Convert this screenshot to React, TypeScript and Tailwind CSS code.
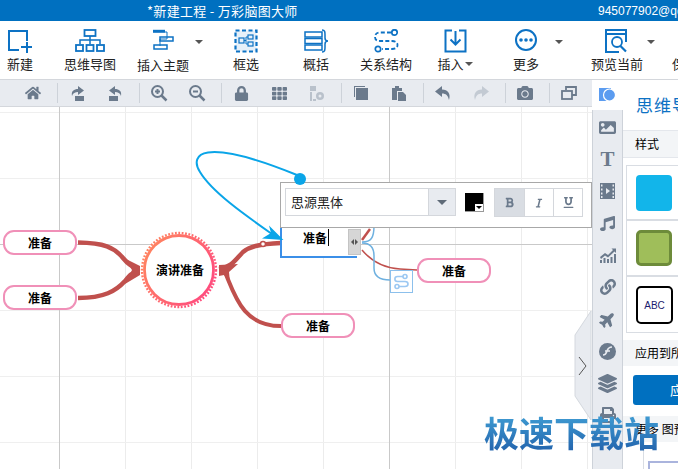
import React from "react";
import { FaHome, FaLock, FaTh, FaCamera, FaMusic, FaLink, FaPlane, FaLayerGroup, FaPrint, FaImage, FaBold, FaItalic, FaUnderline } from "react-icons/fa";

const B = "#0d72c4";
const S = ({ w = 24, children }: { w?: number; children: React.ReactNode }) => (
  <svg width={w} height={24} viewBox={`0 0 ${w} 24`} fill="none" stroke={B} strokeWidth={2}>{children}</svg>
);
const Caret = () => (
  <div className="w-[12px] h-[24px] mt-[11px] flex justify-center items-start shrink-0">
    <div className="w-0 h-0 mt-[8px] border-x-[4px] border-x-transparent border-t-[4px] border-t-[#555]" />
  </div>
);
function Tool({ label, cls, children, lower }: { label: React.ReactNode; cls: string; children: React.ReactNode; lower?: boolean }) {
  return (
    <div className={`${cls} shrink-0 flex flex-col items-center pt-[8px]`}>
      <div className="h-[24px] flex items-center justify-center">{children}</div>
      <div className={`${lower ? "mt-[4px]" : "mt-[3px]"} text-[13px] leading-[16px] text-[#222] whitespace-nowrap`}>{label}</div>
    </div>
  );
}
const Sep = () => (
  <div className="w-[6px] h-[20px] border-r border-[#cdd2d9] shrink-0" />
);
const Cell = ({ children }: { children: React.ReactNode }) => (
  <div className="w-[38px] shrink-0 flex items-center justify-center text-[#6b7a8c]">{children}</div>
);
const Zoom = ({ plus }: { plus?: boolean }) => (
  <svg width="18" height="18" viewBox="0 0 18 18" fill="none" stroke="#6b7a8c" strokeWidth="2">
    <circle cx="7.5" cy="7.5" r="5.5" />
    <path d="M11.5 11.5 L16.5 16.5" strokeWidth="2.5" />
    <path d="M5 7.5h5" />
    {plus && <path d="M7.5 5v5" />}
  </svg>
);
const Turn = ({ flip, light }: { flip?: boolean; light?: boolean }) => (
  <svg width="16" height="15" viewBox="0 0 16 15" fill={light ? "#c3cad3" : "#6b7a8c"} style={{ transform: flip ? "scaleX(-1)" : undefined }}>
    <path d="M7 0 L0 5.5 L7 11 V7.5 C11 7.5 13 9.5 14 14 C16 8 13 3.5 7 3.5 Z" />
  </svg>
);
const TurnBox = ({ flip }: { flip?: boolean }) => (
  <svg width="15" height="15" viewBox="0 0 15 15" fill="#6b7a8c" style={{ transform: flip ? "scaleX(-1)" : undefined }}>
    <path d="M7 0 L1 4.5 L7 9 V6 C10 6 12 7 13 10 C14 5 11 3 7 3 Z" />
    <rect x="1" y="10" width="9" height="5" />
  </svg>
);

function Node({ cls, text = "准备" }: { cls: string; text?: string }) {
  return (
    <div className={`${cls} absolute w-[74px] h-[25px] rounded-[11px] border-2 border-[#f090b8] bg-white flex items-center justify-center text-[12px] font-bold text-black`}>
      {text}
    </div>
  );
}

const vMinor = [125, 191, 257, 323, 455, 521, 587];
const hMinor = [5, 71, 137, 203, 269, 335];
const RED = "#c0504d";
const SKY = "#0aa5e8";

function Diagram() {
  return (
    <svg className="absolute left-0 top-0" width="592" height="362" viewBox="0 107 592 362" fill="none">
      {vMinor.map((x) => <line key={x} x1={x + 0.5} x2={x + 0.5} y1="107" y2="469" stroke="#ececec" />)}
      {hMinor.map((y) => <line key={y} x1="0" x2="592" y1={y + 107.5} y2={y + 107.5} stroke="#efefef" />)}
      <line x1="59.5" x2="59.5" y1="107" y2="469" stroke="#c9c9c9" />
      <line x1="389.5" x2="389.5" y1="107" y2="469" stroke="#c9c9c9" />
      <line x1="0" x2="592" y1="244.5" y2="244.5" stroke="#c9c9c9" />
      {/* branches */}
      <path d="M78 242.500 C104 243 114 247 123 258 C127 263 131 267 138 268" stroke={RED} strokeWidth="4.500" />
      <path d="M78 298 C104 298 116 291 125 281 C129 276 132 272 138 272" stroke={RED} strokeWidth="4.500" />
      <path d="M124 258 L140 266 L140 275 L125 284 L132 270 Z" fill={RED} />
      <path d="M219 269 C232 267 236 259 243 252 C249 247 258 244 281 243" stroke={RED} strokeWidth="4.500" />
      <path d="M225 272 C235 296 243 326 281 326" stroke={RED} strokeWidth="4" />
      <path d="M219 265 L219 276 L224 275 L230 283 L229 272 L238 264 Z" fill={RED} />
      <path d="M362 250 C372 262 384 268 400 269 L417 270" stroke={RED} strokeWidth="1.500" />
      <path d="M362 240 L370 229" stroke={RED} strokeWidth="2.500" />
      <circle cx="263" cy="244" r="2.500" fill="#fff" stroke={RED} strokeWidth="1.500" />
      {/* blue bracket */}
      <path d="M362 242 C371 242 374 238 374 226" stroke="#6fb1e0" strokeWidth="1.500" />
      <path d="M362 243 C371 243 374 248 374 256 L374 268 C374 276 380 280 390 280" stroke="#6fb1e0" strokeWidth="1.500" />
      {/* central topic */}
      <defs>
        <linearGradient id="ring" x1="0" y1="0" x2="1" y2="0.6">
          <stop offset="0" stopColor="#ff8a5c" />
          <stop offset="1" stopColor="#ff4f7d" />
        </linearGradient>
      </defs>
      <circle cx="179" cy="270" r="37" fill="#fff" stroke="url(#ring)" strokeWidth="2.400" strokeDasharray="1.800 1.600" />
      <circle cx="179" cy="270" r="34.500" fill="#fff" stroke="url(#ring)" strokeWidth="2.800" />
    </svg>
  );
}

function Overlay() {
  return (
    <svg className="absolute left-0 top-0 pointer-events-none" width="592" height="362" viewBox="0 107 592 362" fill="none">
      <path d="M297 175 C260 160 225 150 208 152.500 C196 154 194 163 200 172 C212 192 245 215 272 234" stroke={SKY} strokeWidth="2" />
      <path d="M283.500 240 L269 225.500 L271 233 L262 238.500 Z" fill={SKY} />
      <circle cx="300" cy="179" r="6" fill={SKY} />
    </svg>
  );
}

export default function App() {
  return (
    <div className="relative w-[678px] h-[469px] overflow-hidden bg-white flex flex-col font-['Noto_Sans_CJK_SC',sans-serif]">
      <div className="h-[21px] bg-[#0070c0] relative shrink-0 flex items-center text-white">
        <div className="pl-[147px] text-[13px] leading-[20px] tracking-[0.3px] whitespace-nowrap">*新建工程 - 万彩脑图大师</div>
        <div className="ml-auto pl-[1px] w-[81px] overflow-hidden text-[12px] whitespace-nowrap font-['Liberation_Sans',sans-serif]">945077902@qq.com</div>
      </div>

      <div className="h-[59px] shrink-0 flex overflow-hidden border-b border-[#d4d7dc]">
        <Tool cls="w-[40px]" label="新建">
          <S w={24}>
            <path d="M11 21 H1 V2 H19 V12" />
            <path d="M19 13 V24 M13 18 H24" />
          </S>
        </Tool>
        <Tool cls="ml-[20px] w-[60px]" label="思维导图">
          <S w={30}>
            <rect x="9.500" y="1" width="11" height="6" strokeWidth="1.800" />
            <path d="M15 7 V11 M5 15 V11 H25 V15 M15 11 V15" strokeWidth="1.500" />
            <rect x="1" y="16" width="7" height="6" strokeWidth="1.800" />
            <rect x="11.500" y="16" width="7" height="6" strokeWidth="1.800" />
            <rect x="22" y="16" width="7" height="6" strokeWidth="1.800" />
          </S>
        </Tool>
        <Tool cls="ml-[13px] w-[60px]" label="插入主题" lower>
          <S w={22}>
            <rect x="1" y="0.800" width="12" height="3" fill={B} stroke="none" />
            <path d="M13 3 H15 V10 H8 M8 10 V17" strokeWidth="1" />
            <rect x="8" y="8" width="13" height="4" strokeWidth="1.500" />
            <rect x="2" y="16" width="13" height="4" strokeWidth="1.500" />
          </S>
        </Tool>
        <Caret />
        <Tool cls="ml-[11px] w-[60px]" label="框选">
          <S w={24}>
            <rect x="1.500" y="1.500" width="21" height="21" fill="#e6f0f9" strokeDasharray="4 2.500" strokeWidth="2.200" />
            <rect x="5" y="9" width="5" height="5" strokeWidth="1.200" />
            <rect x="14" y="6" width="5" height="4" strokeWidth="1.200" />
            <rect x="14" y="13" width="5" height="4" strokeWidth="1.200" />
            <path d="M10 11.500 H12 M12 8 V15 M12 8 H14 M12 15 H14" strokeWidth="1" />
          </S>
        </Tool>
        <Tool cls="ml-[10px] w-[60px]" label="概括">
          <S w={25}>
            <rect x="1" y="3" width="17" height="5" strokeWidth="1.500" />
            <rect x="1" y="9.500" width="17" height="5" strokeWidth="1.500" />
            <rect x="1" y="16" width="17" height="5" strokeWidth="1.500" />
            <path d="M18 1 C21 1 21 3 21 6 V9 C21 11 22 12 24 12 C22 12 21 13 21 15 V18 C21 21 21 23 18 23" strokeWidth="1.500" />
          </S>
        </Tool>
        <Tool cls="ml-[10px] w-[60px]" label="关系结构">
          <S w={25}>
            <circle cx="20.500" cy="3.500" r="2.700" strokeWidth="1.700" />
            <circle cx="4" cy="20" r="2.700" strokeWidth="1.700" />
            <path d="M17 3.500 H6 C2 3.500 1 6 1 8 C1 11 3 12 6 12 H18 C22 12 23.500 14 23.500 16 C23.500 19 21 20 18 20 H8" strokeDasharray="4 2.200" strokeWidth="1.800" />
          </S>
        </Tool>
        <Tool
          cls="ml-[9px] w-[60px]"
          label={
            <span className="flex items-center gap-[1px]">
              插入
              <span className="w-0 h-0 border-x-[4px] border-x-transparent border-t-[4px] border-t-[#555]" />
            </span>
          }
        >
          <S w={23}>
            <path d="M8 1.500 H1.500 V22.500 H21.500 V1.500 H15" strokeWidth="2" />
            <path d="M11.500 2 V15 M6.500 10.500 L11.500 15.500 L16.500 10.500" strokeWidth="2" />
          </S>
        </Tool>
        <Tool cls="ml-[11px] w-[60px]" label="更多">
          <S w={24}>
            <circle cx="12" cy="11" r="10" strokeWidth="2" />
            <circle cx="7" cy="11" r="1.800" fill={B} stroke="none" />
            <circle cx="12" cy="11" r="1.800" fill={B} stroke="none" />
            <circle cx="17" cy="11" r="1.800" fill={B} stroke="none" />
          </S>
        </Tool>
        <div className="-ml-[3px]"><Caret /></div>
        <Tool cls="ml-[22px] w-[60px]" label="预览当前">
          <S w={24}>
            <path d="M1 5 H21 M14 23 H1 V1 H21 V13" strokeWidth="2" />
            <circle cx="12" cy="13" r="5" strokeWidth="1.800" />
            <path d="M15.500 17 L21 22.500" strokeWidth="2.200" />
          </S>
        </Tool>
        <div className="-ml-[2px]"><Caret /></div>
        <Tool cls="ml-[11px] w-[60px]" label="保存当前">
          <span />
        </Tool>
      </div>

      <div className="flex-1 flex min-h-0">
        <div className="w-[592px] flex flex-col shrink-0">
          <div className="h-[27px] shrink-0 bg-[#e8ebf0] border-b border-[#d4d7dc] pl-[14px] flex items-center">
            <Cell><FaHome size={16} /></Cell>
            <Sep />
            <Cell><TurnBox flip /></Cell>
            <Cell><TurnBox /></Cell>
            <Sep />
            <Cell><Zoom plus /></Cell>
            <Cell><Zoom /></Cell>
            <Sep />
            <Cell><FaLock size={15} /></Cell>
            <Cell><FaTh size={15} /></Cell>
            <Cell>
              <svg width="16" height="15" viewBox="0 0 16 15" fill="#b9c1cb">
                <path d="M1 0h6v5H1z M1 6h2v9H1z M4 13h3v2H4z" />
                <circle cx="11" cy="10" r="4" />
                <circle cx="11" cy="10" r="1.500" fill="#e8ebf0" />
              </svg>
            </Cell>
            <Sep />
            <Cell>
              <svg width="14" height="14" viewBox="0 0 14 14" fill="#6b7a8c">
                <path d="M0 0h11v1H1v10H0z" />
                <rect x="2" y="2" width="12" height="12" />
              </svg>
            </Cell>
            <Cell>
              <svg width="15" height="15" viewBox="0 0 15 15" fill="#6b7a8c">
                <path d="M0 2h3V0h4v2h3v3H5v9H0z" />
                <path d="M6 6h5l3 3v6H6z" />
              </svg>
            </Cell>
            <Sep />
            <Cell><Turn /></Cell>
            <Cell><Turn flip light /></Cell>
            <Sep />
            <Cell><FaCamera size={16} /></Cell>
            <Sep />
            <Cell>
              <svg width="16" height="14" viewBox="0 0 16 14" fill="none" stroke="#6b7a8c" strokeWidth="1.800">
                <path d="M5 4V1h10v8h-4" />
                <rect x="1" y="5" width="10" height="8" />
              </svg>
            </Cell>
          </div>

          <div className="relative flex-1 bg-white overflow-hidden">
            <Diagram />
            <Node cls="left-[3px] top-[123px]" />
            <Node cls="left-[3px] top-[178px]" />
            <Node cls="left-[281px] top-[206px]" />
            <Node cls="left-[417px] top-[151px]" />
            <div className="absolute left-[150px] top-[155px] w-[60px] h-[16px] flex items-center justify-center text-[12px] leading-[16px] font-bold text-black whitespace-nowrap">演讲准备</div>

            <div className="absolute left-[390px] top-[163px] w-[23px] h-[23px] bg-white border border-[#8cc0ec] flex items-center justify-center">
              <svg width="17" height="17" viewBox="0 0 17 17" fill="none" stroke="#9cc8f2" strokeWidth="1.600">
                <circle cx="12" cy="3.500" r="2" />
                <circle cx="4" cy="13.500" r="2" />
                <path d="M10 3.500 H4.500 C1 3.500 1 8.500 4.500 8.500 H12 C16 8.500 16 13.500 12 13.500 H6" />
              </svg>
            </div>

            {/* inline editor */}
            <div className="absolute left-[280px] top-[121px] w-[77px] h-[30px] bg-white border-l-2 border-b-2 border-[#3b8fe8] flex items-start pt-[1px]">
              <span className="ml-[21px] mt-[1px] text-[12px] font-bold text-black leading-[16px]">准备</span>
              <span className="w-px h-[17px] bg-black ml-[1px]" />
            </div>
            <div className="absolute left-[348px] top-[122px] w-[13px] h-[26px] bg-[#d6d6d6] border border-[#c4c4c4] flex items-center justify-center gap-[1px]">
              <span className="w-0 h-0 border-y-[3px] border-y-transparent border-r-[3px] border-r-[#555]" />
              <span className="w-0 h-0 border-y-[3px] border-y-transparent border-l-[3px] border-l-[#555]" />
            </div>

            {/* font popup */}
            <div className="absolute left-[280px] top-[75px] w-[312px] h-[46px] bg-white border border-[#a8a8a8] flex items-start pl-[4px] pt-[5px]">
              <div className="w-[171px] h-[28px] border border-[#d4d7dc] flex">
                <div className="flex-1 pl-[5px] flex items-center text-[13px] text-[#222]">思源黑体</div>
                <div className="w-[27px] bg-[#e8ebf0] border-l border-[#d4d7dc] flex items-center justify-center">
                  <span className="w-0 h-0 border-x-[5px] border-x-transparent border-t-[5px] border-t-[#5f6b78]" />
                </div>
              </div>
              <div className="ml-[9px] mt-[5px] relative w-[19px] h-[19px] bg-black border-r border-b border-[#999]">
                <div className="absolute right-0 bottom-0 w-[8px] h-[7px] bg-white flex items-center justify-center">
                  <span className="w-0 h-0 border-x-[3px] border-x-transparent border-t-[3px] border-t-black" />
                </div>
              </div>
              <div className="ml-[10px] h-[29px] flex border border-[#d4d7dc] text-[#6b7a8c]">
                <div className="w-[29px] bg-[#d9dde3] flex items-center justify-center"><FaBold size={11} /></div>
                <div className="w-[29px] border-l border-[#d4d7dc] flex items-center justify-center"><FaItalic size={10} /></div>
                <div className="w-[29px] border-l border-[#d4d7dc] flex items-center justify-center"><FaUnderline size={11} /></div>
              </div>
            </div>

            <Overlay />
          </div>
        </div>

        {/* icon rail */}
        <div className="w-[31px] shrink-0 flex flex-col text-[#6b7a8c]">
          <div className="h-[30px] shrink-0 bg-white flex items-center justify-center">
            <svg width="17" height="14" viewBox="0 0 17 14">
              <rect x="0" y="0" width="12" height="13" fill="#5b9cf0" />
              <circle cx="10.500" cy="7" r="6" fill="#5b9cf0" stroke="#fff" strokeWidth="1.200" />
            </svg>
          </div>
          <div className="flex-1 bg-[#e8ebf0] border-x border-[#cdd2d9] pt-px flex flex-col items-center">
            {[
              <FaImage key="a" size={17} />,
              <span key="b" className="font-['Liberation_Serif',serif] font-bold text-[21px] leading-none">T</span>,
              <svg key="c" width="15" height="16" viewBox="0 0 15 16" fill="currentColor">
                <path fillRule="evenodd" d="M0 0h15v16H0z M1 1.500v2h1.500v-2z M1 5.500v2h1.500v-2z M1 9.500v2h1.500v-2z M1 13v2h1.500v-2z M12.500 1.500v2H14v-2z M12.500 5.500v2H14v-2z M12.500 9.500v2H14v-2z M12.500 13v2H14v-2z" />
                <path d="M6 5 L10 8 L6 11 Z" fill="#e8ebf0" />
              </svg>,
              <FaMusic key="d" size={15} />,
              <svg key="e" width="16" height="15" viewBox="0 0 16 15" fill="currentColor">
                <path d="M0 12h2v3H0z M3.500 10h2v5h-2z M7 11h2v4H7z M10.500 9h2v6h-2z M14 6h2v9h-2z" />
                <path d="M0 9 L5 5 L8 7 L13 2 L11.500 0.500 H16 V5 L14.500 3.500 L8 9.500 L5 7.500 L1 11Z" />
              </svg>,
              <FaLink key="f" size={16} />,
              <FaPlane key="g" size={17} className="-rotate-45" />,
              <svg key="h" width="17" height="17" viewBox="0 0 17 17">
                <circle cx="8.500" cy="8.500" r="8.500" fill="currentColor" />
                <path d="M4 12 C7 12 7 10 8 8 C9 5 10 4 13 4 M6 8 H11" stroke="#e8ebf0" strokeWidth="1.700" fill="none" />
              </svg>,
              <FaLayerGroup key="i" size={19} />,
              <FaPrint key="j" size={16} />,
            ].map((ic, i) => (
              <div key={i} className="h-[32px] w-full flex items-center justify-center shrink-0">{ic}</div>
            ))}
          </div>
        </div>

        {/* side panel */}
        <div className="flex-1 min-w-0 overflow-hidden bg-white">
          <div className="w-[200px]">
            <div className="h-[50px] pl-[13px] pt-[14px] text-[#0d72c4] text-[17px] leading-[22px] tracking-[1px] whitespace-nowrap">思维导图样式</div>
            <div className="h-[28px] bg-[#f3f5f7] border-y border-[#e4e7ec] pl-[12px] flex items-center text-[12px] text-black">样式</div>
            <div className="ml-[3px] mt-[7px] w-[70px] border border-[#d9dde3]">
              <div className="h-[55px] border-b-2 border-[#d9dde3] pl-[9px] pt-[9px]">
                <div className="w-[36px] h-[36px] rounded-[4px] bg-[#12b5ea]" />
              </div>
              <div className="h-[56px] border-b-2 border-[#d9dde3] pl-[9px] pt-[9px]">
                <div className="w-[36px] h-[36px] rounded-[5px] bg-[#9fbe5a] border-[3px] border-[#6d8b3a]" />
              </div>
              <div className="h-[55px] pl-[9px] pt-[9px]">
                <div className="w-[37px] h-[38px] rounded-[5px] bg-white border-2 border-black flex items-center justify-center text-[10px] text-[#1a1a6e] font-['Liberation_Sans',sans-serif]">ABC</div>
              </div>
            </div>
            <div className="mt-[7px] h-[26px] bg-[#f3f5f7] pl-[12px] flex items-center text-[12px] text-black whitespace-nowrap">应用到所有</div>
            <div className="ml-[10px] mt-[9px] w-[100px] h-[30px] rounded-[3px] bg-[#0070c0] text-white text-[13px] flex items-center justify-center">应用</div>
            <div className="mt-[11px] h-[26px] bg-[#f3f5f7] pl-[12px] flex items-center text-[12px] text-black whitespace-nowrap">更多 图预览</div>
            <div className="ml-[20px] mt-[8px] w-[100px] h-[20px] border-l border-[#d9dde3] pl-[4px] pt-[11px]">
              <div className="h-[9px] border-2 border-b-0 border-[#aab4dd]" />
            </div>
          </div>
        </div>
      </div>

      {/* collapse tab */}
      <svg className="absolute left-[574px] top-[310px]" width="18" height="112" viewBox="0 0 18 112">
        <path d="M17 1 L1 25 V86 L17 110 Z" fill="#e8ebf0" stroke="#d4d8de" />
        <path d="M5 47 L12 56 L5 65" fill="none" stroke="#555" strokeWidth="1" />
      </svg>

      <div className="absolute left-[484px] top-[406px] text-[35px] leading-[52px] font-bold whitespace-nowrap bg-gradient-to-b from-[#48aadc] to-[#1f5aa6] bg-clip-text text-transparent">
        极速下载站
      </div>
    </div>
  );
}
